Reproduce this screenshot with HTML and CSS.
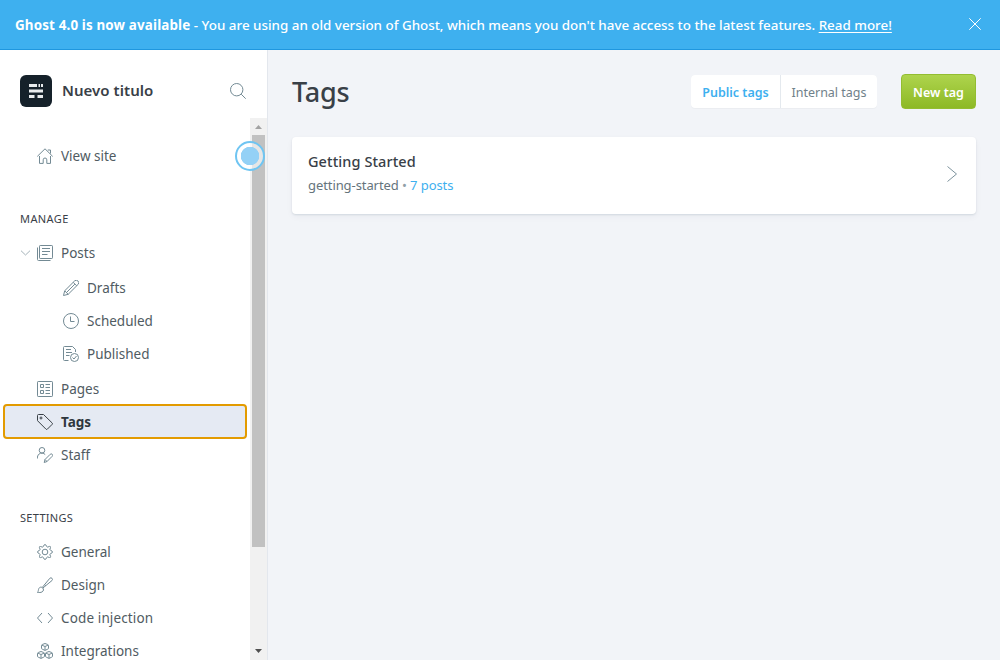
FILE: index.html
```html
<!DOCTYPE html>
<html lang="en">
<head>
<meta charset="utf-8">
<title>Tags - Nuevo titulo</title>
<link rel="stylesheet" href="styles.css">
</head>
<body>
<div class="app">
  <aside class="banner">
    <p><strong>Ghost 4.0 is now available</strong><span class="message"> - You are using an old version of Ghost, which means you don't have access to the latest features. </span><a href="#">Read more!</a></p>
    <svg class="close" viewBox="0 0 12 12"><path d="M.3.3l11.4 11.4M11.7.3L.3 11.7"/></svg>
  </aside>
  <div class="body">
    <nav class="sidebar">
      <header class="site">
        <svg class="logo" viewBox="0 0 32 32"><rect width="32" height="32" rx="6" fill="#15212a"/><path fill="#e8ebed" d="M9 9h8v3H9zM18.500 9h1.500v3h-1.500zM21 9h2v3h-2zM9 14.500h14v3H9zM9 20h5.500v3H9zM17.500 20H23v3h-5.500z"/></svg>
        <span class="site-name">Nuevo titulo</span>
        <svg class="icon search" viewBox="0 0 16 16"><circle cx="6.700" cy="6.700" r="6.200"/><path d="M11.200 11.200l4.500 4.500"/></svg>
      </header>
      <div class="scroller">
        <div class="menu">
          <a class="item view"><svg class="icon" viewBox="0 0 16 16"><path d="M.3 8.400L8 .8l7.700 7.600M2.500 8v7.400h3.700v-3.600a1.800 1.800 0 0 1 3.600 0v3.600h3.700V8M10.800 2h2.700v3.500"/></svg><span>View site</span></a>
          <h2 class="manage">Manage</h2>
          <a class="item posts"><svg class="chevron" viewBox="0 0 10 6"><path d="M.5.7L5 5 9.500.7"/></svg><svg class="icon" viewBox="0 0 16 16"><rect x="2.500" y=".5" width="13" height="13" rx=".7"/><path d="M.5 2.500v12q0 1 1 1h12M5 3.500h8M5 6.500h8M5 9.500h5.500"/></svg><span>Posts</span></a>
          <div class="submenu">
            <a class="item"><svg class="icon" viewBox="0 0 16 16"><path d="M.5 15.500l1.200-4.700L11.500 1a2 2 0 0 1 3.500 3.500L5.200 14.300zM1.700 10.800l3.500 3.500M10.200 2.300l3.500 3.500M3.500 12.500l8.400-8.400"/></svg><span>Drafts</span></a>
            <a class="item"><svg class="icon" viewBox="0 0 16 16"><circle cx="8" cy="8" r="7.500"/><path d="M7.500 3.500v5h4"/></svg><span>Scheduled</span></a>
            <a class="item"><svg class="icon" viewBox="0 0 16 16"><path d="M5.500 14.500h-4a1 1 0 0 1-1-1v-12a1 1 0 0 1 1-1h8L12.500 3.500V6M3 3.500h5M3 6.500h6M3 9.500h3.500"/><circle cx="11.500" cy="11.500" r="4"/><path d="M9.500 11.500l1.500 1.500 2.500-3"/></svg><span>Published</span></a>
          </div>
          <a class="item"><svg class="icon" viewBox="0 0 16 16"><rect x=".5" y=".5" width="15" height="15" rx=".7"/><path d="M3.500 3.500h3v3h-3zM3.500 9.500h3v3h-3zM8.500 3.500H13M8.500 6.500H13M8.500 9.500H13M8.500 12.500H13"/></svg><span>Pages</span></a>
          <a class="item active"><svg class="icon" viewBox="0 0 16 16"><path d="M.5 1.500q0-1 1-1h5L15.200 9q.6.700 0 1.300l-4.900 4.900q-.7.600-1.300 0L.5 6.700z"/><circle cx="4" cy="4" r="1"/></svg><span>Tags</span></a>
          <a class="item"><svg class="icon" viewBox="0 0 16 16"><circle cx="5" cy="3.300" r="2.800"/><path d="M.4 11.500V10a4.500 4.500 0 0 1 7.800-2.500M7.200 15.500l.8-3 5.200-5.200a1.400 1.400 0 0 1 2 2l-5.200 5.200zM8 12.500l2 2"/></svg><span>Staff</span></a>
          <h2 class="settings">Settings</h2>
          <a class="item"><svg class="icon" viewBox="0 0 16 16"><circle cx="8" cy="8" r="2.800"/><path stroke-linejoin="round" d="M6.200 2.700Q7 .5 8 .5t1.800 2.200q.4.600 1.100.3 2.100-1 2.500-.4t-.4 2.500q-.3.700.4 1.100Q15.500 7 15.500 8t-2.200 1.800q-.6.400-.3 1.100 1 2.100.4 2.500t-2.500-.4q-.7-.3-1.100.4Q9 15.500 8 15.500t-1.800-2.200q-.4-.6-1.100-.3-2.100 1-2.500.4t.4-2.500q.3-.7-.4-1.100Q.5 9 .5 8t2.200-1.800q.6-.4.300-1.100-1-2.100-.4-2.500t2.500.4q.7.300 1.100-.3z"/></svg><span>General</span></a>
          <a class="item"><svg class="icon" viewBox="0 0 16 16"><path d="M.5 15.500c1-1.200.7-2.500 1.300-3.900.8-1.700 2.700-1.900 3.900-.7s1 3.100-.6 4c-1.400.8-3 .6-4.600.6zM5.200 10.500l7.600-9.200a1.500 1.500 0 0 1 2.200 2.200L5.900 11M7.600 7.700l1.300 1.200"/></svg><span>Design</span></a>
          <a class="item"><svg class="icon" viewBox="0 0 16 16"><path d="M5 3L.5 8 5 13M11 3l4.500 5-4.500 5"/></svg><span class="code">Code injection</span></a>
          <a class="item"><svg class="icon" viewBox="0 0 16 16"><path d="M8 .5l2.700 1q.8.300.8 1v2.700q0 .7-.8 1L8 7.400l-2.700-1.200q-.8-.3-.8-1V2.500q0-.7.800-1zM5 2.200l3 1.300 3-1.300M8 3.500v3.700M4 8.500l2.700 1q.8.300.8 1v2.700q0 .7-.8 1L4 15.400l-2.700-1.200q-.8-.3-.8-1v-2.700q0-.7.800-1zM1 10.200l3 1.300 3-1.300M4 11.500v3.700M12 8.500l2.700 1q.8.300.8 1v2.700q0 .7-.8 1L12 15.400l-2.700-1.200q-.8-.3-.8-1v-2.700q0-.7.800-1zM9 10.200l3 1.300 3-1.300M12 11.500v3.700"/></svg><span>Integrations</span></a>
        </div>
        <div class="scrollbar">
          <svg viewBox="0 0 17 17"><path fill="#a3a3a3" d="M5 11l3.500-4 3.500 4z"/></svg>
          <div class="thumb"></div>
          <svg class="down" viewBox="0 0 17 17"><path fill="#505050" d="M5 6l3.500 4L12 6z"/></svg>
        </div>
        <i class="beacon"></i>
      </div>
    </nav>
    <main>
      <header class="top">
        <h1>Tags</h1>
        <div class="tabs"><span class="tab selected">Public tags</span><span class="tab">Internal tags</span></div>
        <button>New tag</button>
      </header>
      <section class="card">
        <div><h3>Getting Started</h3><p>getting-started <b>•</b> <a>7 posts</a></p></div>
        <svg class="next" viewBox="0 0 10 16"><path d="M.5.5L9.500 8l-9 7.500"/></svg>
      </section>
    </main>
  </div>
</div>
</body>
</html>
```
FILE: styles.css
```css
* { box-sizing: border-box; }
body, h1, h2, h3, p { margin: 0; }
body { overflow: hidden; font: 13.500px/20px "Noto Sans", "Open Sans", sans-serif; color: #394047; }
svg { display: block; flex: none; fill: none; }
.app { display: flex; flex-direction: column; width: 1000px; height: 660px; }
.banner { flex: none; display: flex; align-items: center; justify-content: space-between; height: 50px; padding: 0 19px 1px 15px; background: #3eb0ef; border-bottom: 1px solid #1f97df; color: #fff; font-size: 13.400px; font-weight: 500; white-space: nowrap; }
.banner p { padding-top: 2px; }
.banner strong { letter-spacing: .15px; }
.banner a { color: inherit; text-underline-offset: 2px; }
.close { width: 12px; height: 12px; stroke: #fff; }
.body { display: flex; flex: 1; min-height: 0; }
.sidebar { flex: none; display: flex; flex-direction: column; width: 268px; border-right: 1px solid #e3e7ed; background: #fff; }
.site { display: flex; align-items: center; height: 68px; flex: none; padding: 14px 21px 0 20px; }
.logo { width: 32px; height: 32px; margin-right: 10px; }
.site-name { flex: 1; padding-bottom: 2px; font-size: 15px; font-weight: 600; letter-spacing: .05px; }
.icon { width: 16px; height: 16px; stroke: #738a94; stroke-width: 1; }
.scroller { position: relative; display: flex; flex: 1; min-height: 0; }
.menu { width: 250px; padding: 21px 3px 0; overflow: hidden; }
.item { display: flex; align-items: center; height: 33px; padding-left: 34px; color: #505b62; }
.item .icon { margin-right: 8px; }
.item span { white-space: nowrap; }
.item .code { letter-spacing: .13px; }
h2 { font-size: 11px; line-height: 16px; font-weight: 400; text-transform: uppercase; padding-left: 17px; }
.manage { margin: 39px 0 9px; letter-spacing: .4px; }
.settings { margin: 39px 0 9px; letter-spacing: .3px; }
.posts { padding-left: 17px; }
.chevron { width: 11px; height: 6px; margin-right: 6px; stroke: #a5b3ba; }
.submenu { padding: 2px 0 2px 26px; }
.active { height: 35px; margin: -1px 0; padding-left: 32px; width: 244px; background: #e5eaf3; border: 2px solid #e39b00; border-radius: 4px; color: #2e373d; font-weight: 700; }
.active .icon { stroke: #394047; }
.scrollbar { display: flex; flex-direction: column; width: 17px; background: #f1f1f1; }
.scrollbar svg { width: 17px; height: 17px; }
.thumb { width: 13px; height: 412px; margin-left: 2px; background: #c1c1c1; }
.scrollbar .down { margin-top: auto; }
.beacon { position: absolute; left: 235px; top: 23px; width: 30px; height: 30px; border: 2px solid #6fc5f2; border-radius: 50%; background: radial-gradient(circle, #94d1f6 0 9px, rgba(255,255,255,.6) 9.500px); }
main { flex: 1; padding: 24px 24px 0; background: #f2f4f8; }
.top { display: flex; align-items: center; height: 35px; }
h1 { flex: 1; font-size: 27px; line-height: 35px; font-weight: 500; letter-spacing: -.2px; }
.tabs { display: flex; gap: 1px; height: 33px; margin-right: 24px; background: #e4e9ee; border-radius: 4px; overflow: hidden; box-shadow: 0 1px 1px rgba(0,0,0,.03); }
.tab { display: flex; align-items: center; justify-content: center; width: 96px; padding-top: 2px; background: #fff; color: #70818a; font-size: 12.500px; }
.selected { width: 89px; color: #3eb0ef; font-weight: 600; }
button { width: 75px; height: 35px; padding: 1px 0 0; border: 1px solid #93bd31; border-radius: 4px; background: linear-gradient(#aed44d, #8db925); color: #fff; font: 600 12.500px "Noto Sans", sans-serif; }
.card { display: flex; align-items: center; justify-content: space-between; height: 77px; margin-top: 28px; padding: 0 19px 3px 16px; background: #fff; border-radius: 4px; box-shadow: 0 1px 2px rgba(30,60,80,.12), 0 3px 7px rgba(30,60,80,.04); }
.card div { padding-bottom: 4px; }
h3 { font-size: 14.500px; line-height: 22px; font-weight: 500; margin-bottom: 3px; letter-spacing: .08px; }
.card p { font-size: 13px; line-height: 20px; color: #65747c; letter-spacing: -.08px; }
.card a { color: #3eb0ef; }
.card b { font-weight: 400; color: #91a0a8; }
.next { width: 10px; height: 16px; stroke: #7d929c; }
```
